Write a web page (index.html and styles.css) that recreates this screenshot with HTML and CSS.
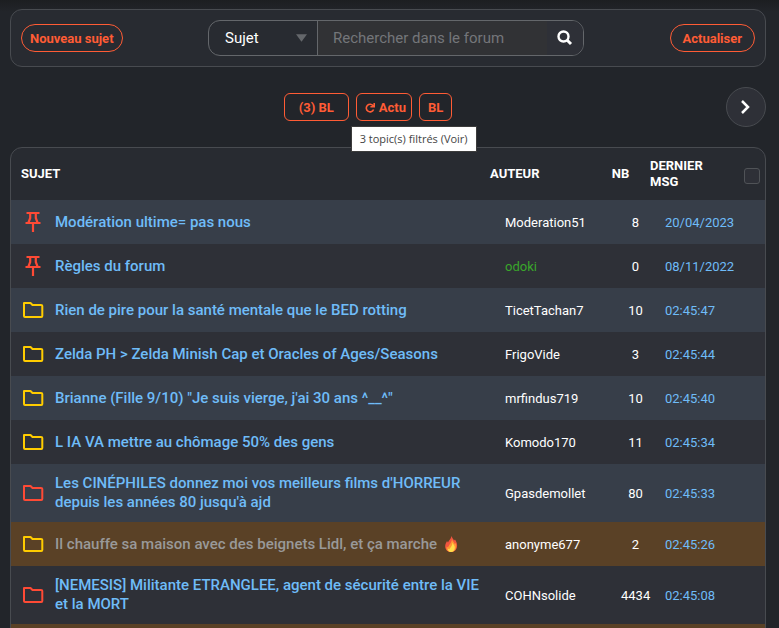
FILE: index.html
```html
<!DOCTYPE html>
<html lang="fr">
<head>
    <meta charset="UTF-8">
    <meta name="viewport" content="width=device-width, initial-scale=1.0">
    <title>Forum</title>
    <link rel="stylesheet" href="styles.css">
</head>
<body>
    <!-- shared icons -->
    <svg class="sprite" aria-hidden="true">
        <symbol id="icon-pin" viewBox="0 0 16 20">
            <path d="M1.500 1h13M5.200 1v5L3.500 10.500M10.800 1v5l1.700 4.500M0.500 11h15M8 11v9" fill="none" stroke="currentColor" stroke-width="2.200"/>
        </symbol>
        <symbol id="icon-folder" viewBox="0 0 22 18">
            <path d="M2 2h6.500l2 2H19q1.300 0 1.300 1v10q0 1-1 1H3q-1 0-1-1V2z" fill="none" stroke="currentColor" stroke-width="2" stroke-linejoin="round"/>
        </symbol>
    </svg>

    <header class="toolbar">
        <button class="btn btn-round" type="button">Nouveau sujet</button>
        <form class="search">
            <div class="search-type">
                <select aria-label="Type de recherche">
                    <option>Sujet</option>
                    <option>Auteur</option>
                </select>
                <svg class="arrow" viewBox="0 0 12 8" aria-hidden="true"><path d="M0 0h12L6 8z" fill="currentColor"/></svg>
            </div>
            <input class="search-input" type="text" placeholder="Rechercher dans le forum" aria-label="Rechercher dans le forum">
            <button class="search-btn" type="submit" aria-label="Rechercher">
                <svg width="16" height="16" viewBox="0 0 16 16" fill="none" stroke="currentColor"><circle cx="6.500" cy="6.500" r="5" stroke-width="2.400"/><path d="M10 10l4 4" stroke-width="3"/></svg>
            </button>
        </form>
        <button class="btn btn-round btn-refresh" type="button">Actualiser</button>
    </header>

    <nav class="pager">
        <div class="filters">
            <div class="filter">
                <button class="btn btn-wide" type="button" aria-describedby="filter-tip">(3) BL</button>
                <div class="tooltip" id="filter-tip" role="tooltip">3 topic(s) filtrés (Voir)</div>
            </div>
            <button class="btn btn-icon" type="button">
                <svg width="10" height="12" viewBox="0 0 10 12" fill="none" stroke="currentColor" stroke-width="1.600"><path d="M8.300 5A3.800 3.800 0 1 0 8.600 8.500M9.200 2v3.800H5.400"/></svg>
                Actu
            </button>
            <button class="btn" type="button">BL</button>
        </div>
        <a class="next" href="#" aria-label="Page suivante">
            <svg width="10" height="14" viewBox="0 0 10 14" fill="none" stroke="currentColor" stroke-width="2.500"><path d="M1 1l6 6-6 6"/></svg>
        </a>
    </nav>

    <main class="topics">
        <table>
            <colgroup>
                <col class="col-icon">
                <col>
                <col class="col-author">
                <col class="col-count">
                <col class="col-date">
                <col class="col-check">
            </colgroup>
            <thead>
                <tr>
                    <th class="head-subject" colspan="2">SUJET</th>
                    <th>AUTEUR</th>
                    <th class="head-count">NB</th>
                    <th class="head-date">DERNIER MSG</th>
                    <th class="head-check"><input type="checkbox" aria-label="Tout sélectionner"></th>
                </tr>
            </thead>
            <tbody>
                <tr class="alt">
                    <td class="icon red"><svg width="16" height="20"><use href="#icon-pin"/></svg></td>
                    <td class="subject"><a href="#">Modération ultime= pas nous</a></td>
                    <td class="author">Moderation51</td>
                    <td class="count">8</td>
                    <td class="date" colspan="2"><a href="#">20/04/2023</a></td>
                </tr>
                <tr>
                    <td class="icon red"><svg width="16" height="20"><use href="#icon-pin"/></svg></td>
                    <td class="subject"><a href="#">Règles du forum</a></td>
                    <td class="author modo">odoki</td>
                    <td class="count">0</td>
                    <td class="date" colspan="2"><a href="#">08/11/2022</a></td>
                </tr>
                <tr class="alt">
                    <td class="icon yellow"><svg width="22" height="18"><use href="#icon-folder"/></svg></td>
                    <td class="subject"><a href="#">Rien de pire pour la santé mentale que le BED rotting</a></td>
                    <td class="author">TicetTachan7</td>
                    <td class="count">10</td>
                    <td class="date" colspan="2"><a href="#">02:45:47</a></td>
                </tr>
                <tr>
                    <td class="icon yellow"><svg width="22" height="18"><use href="#icon-folder"/></svg></td>
                    <td class="subject"><a href="#">Zelda PH &gt; Zelda Minish Cap et Oracles of Ages/Seasons</a></td>
                    <td class="author">FrigoVide</td>
                    <td class="count">3</td>
                    <td class="date" colspan="2"><a href="#">02:45:44</a></td>
                </tr>
                <tr class="alt">
                    <td class="icon yellow"><svg width="22" height="18"><use href="#icon-folder"/></svg></td>
                    <td class="subject"><a href="#">Brianne (Fille 9/10) "Je suis vierge, j'ai 30 ans ^__^"</a></td>
                    <td class="author">mrfindus719</td>
                    <td class="count">10</td>
                    <td class="date" colspan="2"><a href="#">02:45:40</a></td>
                </tr>
                <tr>
                    <td class="icon yellow"><svg width="22" height="18"><use href="#icon-folder"/></svg></td>
                    <td class="subject"><a href="#">L IA VA mettre au chômage 50% des gens</a></td>
                    <td class="author">Komodo170</td>
                    <td class="count">11</td>
                    <td class="date" colspan="2"><a href="#">02:45:34</a></td>
                </tr>
                <tr class="alt">
                    <td class="icon red"><svg width="22" height="18"><use href="#icon-folder"/></svg></td>
                    <td class="subject"><a href="#">Les CINÉPHILES donnez moi vos meilleurs films d'HORREUR depuis les années 80 jusqu'à ajd</a></td>
                    <td class="author">Gpasdemollet</td>
                    <td class="count">80</td>
                    <td class="date" colspan="2"><a href="#">02:45:33</a></td>
                </tr>
                <tr class="marked">
                    <td class="icon yellow"><svg width="22" height="18"><use href="#icon-folder"/></svg></td>
                    <td class="subject visited"><a href="#">Il chauffe sa maison avec des beignets Lidl, et ça marche
                        <svg class="fire" width="14" height="16" viewBox="1 0 14 16" role="img" aria-label="feu">
                            <path d="M8.500 0C9 2 10.500 3 11 4.500L12 3.500C13.500 6 14.500 8 14 11c-.5 3-3 5-6 5s-5.500-2-5.800-5C2 8.500 3 7 4 5l1 1.500C6 4 8 3 8.500 0z" fill="#f2553f"/>
                            <path d="M9 3C9.500 5 11.500 6.500 11.700 8l1-1c1.300 3.500.3 9-4.700 9-3.300 0-5-2.500-4.300-5.500l1.300 1C6 8.500 8.500 7 9 3z" fill="#ff9635"/>
                            <path d="M9.500 6.500c.5 2 2.500 3 2.300 5.500C11.500 14.500 10 16 8 16s-3.200-1.500-3-3.300l1.300.6C7.300 11.500 9.500 10 9.500 6.500z" fill="#ffdc4a"/>
                        </svg></a></td>
                    <td class="author">anonyme677</td>
                    <td class="count">2</td>
                    <td class="date" colspan="2"><a href="#">02:45:26</a></td>
                </tr>
                <tr>
                    <td class="icon red"><svg width="22" height="18"><use href="#icon-folder"/></svg></td>
                    <td class="subject"><a href="#">[NEMESIS] Militante ETRANGLEE, agent de sécurité entre la VIE et la MORT</a></td>
                    <td class="author">COHNsolide</td>
                    <td class="count">4434</td>
                    <td class="date" colspan="2"><a href="#">02:45:08</a></td>
                </tr>
                <tr class="marked">
                    <td colspan="6"></td>
                </tr>
            </tbody>
        </table>
    </main>
</body>
</html>
```
FILE: styles.css
```css
:root {
    --bg: #22252a;
    --panel: #282b31;
    --row: #2e3037;
    --row-alt: #373e49;
    --marked: #5a4126;
    --border: #484b50;
    --accent: #ff5c35;
    --link: #6fbcf8;
}

* {
    box-sizing: border-box;
}

body {
    margin: 0;
    height: 100vh;
    overflow: hidden;
    padding: 9px 13px 0 10px;
    background: linear-gradient(#1c1e21, var(--bg) 12px) var(--bg);
    color: #fff;
    font-family: Roboto, "Liberation Sans", sans-serif;
    font-size: 13px;
}

a {
    color: inherit;
    text-decoration: none;
}

.sprite {
    display: none;
}

/* top bar */
.toolbar {
    display: flex;
    align-items: center;
    justify-content: space-between;
    padding: 10px;
    background: var(--panel);
    border: 1px solid var(--border);
    border-radius: 12px;
}

.btn {
    height: 28px;
    padding: 0 8px;
    background: none;
    border: 1px solid var(--accent);
    border-radius: 6px;
    color: var(--accent);
    font: bold 13px Roboto, "Liberation Sans", sans-serif;
    white-space: nowrap;
    cursor: pointer;
}

.btn-round {
    border-radius: 14px;
}

.btn-refresh {
    padding: 0 12px;
}

.btn-wide {
    padding: 0 14px;
}

.btn-icon {
    display: flex;
    align-items: center;
    gap: 4px;
    padding: 0 5px 0 8px;
}

.search {
    display: flex;
    flex: 0 1 376px;
    height: 36px;
    border: 1px solid #64676b;
    border-radius: 12px;
    overflow: hidden;
}

.search-type {
    position: relative;
    width: 109px;
    border-right: 1px solid #64676b;
}

.search-type select {
    width: 100%;
    height: 100%;
    padding: 0 16px;
    appearance: none;
    background: none;
    border: 0;
    color: #fff;
    font: 15px Roboto, "Liberation Sans", sans-serif;
}

.arrow {
    position: absolute;
    top: 13px;
    right: 10px;
    width: 11px;
    height: 8px;
    color: #64676b;
    pointer-events: none;
}

.search-input {
    flex: 1;
    min-width: 0;
    padding: 0 15px;
    background: #313235;
    border: 0;
    color: #fff;
    font: 15px Roboto, "Liberation Sans", sans-serif;
}

.search-input::placeholder {
    color: #74767a;
}

.search-btn {
    display: flex;
    align-items: center;
    justify-content: center;
    width: 36px;
    padding: 0;
    background: var(--row);
    border: 0;
    color: #fff;
}

/* filters and page navigation */
.pager {
    display: flex;
    align-items: center;
    margin: 20px 0;
}

.filters {
    display: flex;
    flex: 1;
    justify-content: center;
    gap: 7px;
}

.filter {
    position: relative;
}

.tooltip {
    position: absolute;
    top: 33px;
    left: 67px;
    padding: 4px 8px;
    background: #fff;
    border: 1px solid #3c3c3c;
    color: #444;
    font: 11px/16px "Open Sans", "Noto Sans", sans-serif;
    white-space: nowrap;
    z-index: 1;
}

.next {
    display: flex;
    align-items: center;
    justify-content: center;
    width: 40px;
    height: 40px;
    background: var(--row);
    border: 1px solid var(--border);
    border-radius: 50%;
}

/* topic list */
.topics {
    border: 1px solid var(--border);
    border-radius: 12px;
    background: var(--panel);
    overflow: hidden;
}

table {
    width: 100%;
    table-layout: fixed;
    border-collapse: collapse;
}

.col-icon {
    width: 44px;
}

.col-author {
    width: 101px;
}

.col-count {
    width: 59px;
}

.col-date {
    width: 85px;
}

.col-check {
    width: 30px;
}

th {
    padding: 10px 0;
    font-weight: bold;
    line-height: 16px;
    text-align: left;
}

.head-subject {
    padding-left: 10px;
}

.head-count {
    text-align: center;
}

.head-date {
    padding-right: 10px;
}

.head-check {
    padding: 4px 5px 0 0;
    text-align: right;
}

.head-check input {
    appearance: none;
    width: 16px;
    height: 16px;
    margin: 0;
    background: var(--row);
    border: 1px solid #505357;
    border-radius: 3px;
    vertical-align: middle;
}

td {
    height: 44px;
    padding: 0;
}

tbody tr {
    background: var(--row);
}

tbody tr.alt {
    background: var(--row-alt);
}

tbody tr.marked {
    background: var(--marked);
}

.icon {
    text-align: center;
}

.icon svg {
    display: block;
    margin: 0 auto;
}

.red {
    color: #ff4a35;
}

.yellow {
    color: #ffcc00;
}

.subject {
    padding: 10px 8px 10px 0;
    color: var(--link);
    font-size: 15px;
    font-weight: 500;
    line-height: 19px;
}

.visited {
    color: #999;
}

.fire {
    margin-left: 3px;
    vertical-align: -3px;
}

.author {
    padding-left: 15px;
    white-space: nowrap;
}

.modo {
    color: #3aa62b;
}

.count {
    padding-left: 30px;
    text-align: center;
}

.date {
    padding-left: 15px;
    color: var(--link);
}
```
